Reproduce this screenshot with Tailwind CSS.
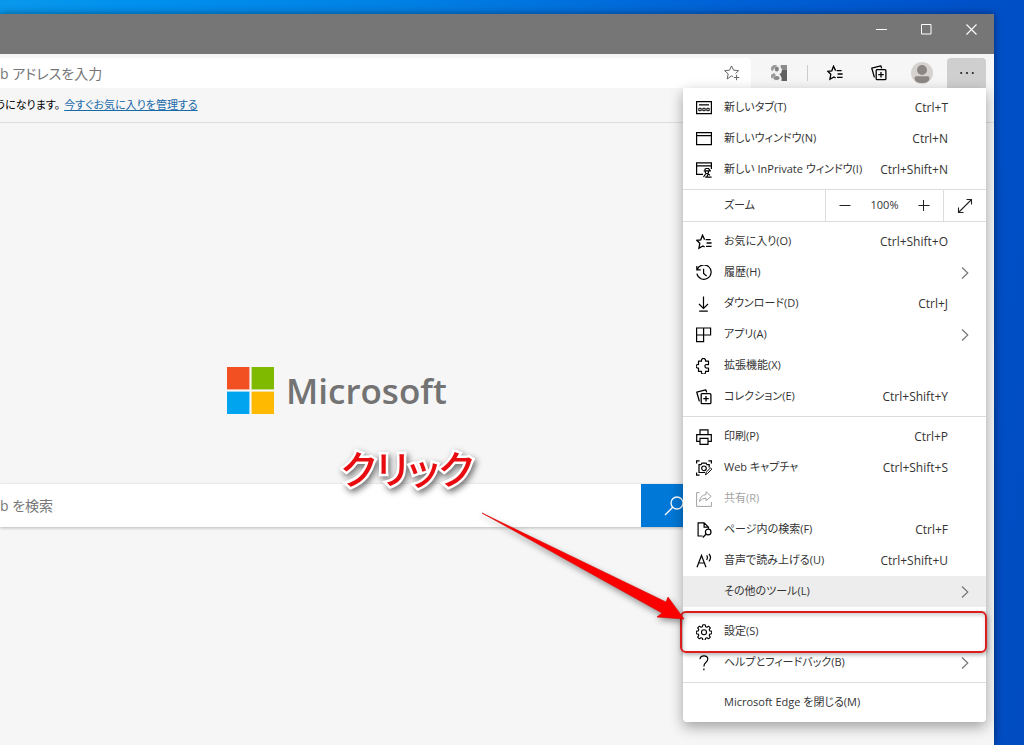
<!DOCTYPE html>
<html lang="ja">
<head>
<meta charset="utf-8">
<meta name="viewport" content="width=device-width, initial-scale=1">
<title>新しいタブ</title>
<script src="https://cdn.jsdelivr.net/npm/@tailwindcss/browser@4"></script>
</head>
<body class="font-['Open_Sans','Noto_Sans_CJK_JP',sans-serif] [font-feature-settings:'palt'] text-[#333]">
<svg class="hidden">
  <symbol id="favs" viewBox="0 0 16 16"><path d="M9.6 5.6H14.6M10.6 9H15.6M10 12.4H15.6M8.6 5.6 6.5 1.2 4.8 5.8 0.8 6.3 3.8 9.3 2.9 14.3 6.9 11.9 8.6 13" fill="none" stroke="currentColor" stroke-width="1.3"/></symbol>
  <symbol id="coll" viewBox="0 0 16 16"><path d="M5.2 4.700h8.700q1 0 1 1v8q0 1-1 1H6.200q-1 0-1-1V4.700M10 7v5.400M7.300 9.700h5.400M3.400 12.400 .8 3.200 9.800.8l.9 2.600" fill="none" stroke="currentColor" stroke-width="1.3" stroke-linejoin="round"/></symbol>
  <symbol id="chev" viewBox="0 0 8 14"><path d="M1 1.5 6.8 7 1 12.5" fill="none" stroke="#777" stroke-width="1.2"/></symbol>
</svg>

<div class="min-h-screen flex overflow-hidden relative pt-[14px] pr-[30px] bg-[linear-gradient(100deg,#0a98ec_0%,#0090ee_12%,#0080e4_35%,#0062d6_62%,#0050c8_85%,#004cc0_100%)]">
  <div class="relative flex-1 flex flex-col bg-[#f6f6f6] shadow-[0_0_8px_rgba(0,0,0,0.45)]">

    <header class="h-10 bg-[#767676] flex justify-end text-white">
      <button aria-label="最小化" class="w-[45px] h-[31px] flex items-center justify-center"><svg class="w-[11px] h-[11px]" viewBox="0 0 11 11"><path d="M0 5.5h11" stroke="currentColor"/></svg></button>
      <button aria-label="最大化" class="w-[45px] h-[31px] flex items-center justify-center"><svg class="w-[11px] h-[11px]" viewBox="0 0 11 11"><path d="M.5 .5h9.5v9.5H.5z" fill="none" stroke="currentColor"/></svg></button>
      <button aria-label="閉じる" class="w-[45px] h-[31px] flex items-center justify-center"><svg class="w-[11px] h-[11px]" viewBox="0 0 11 11"><path d="M.5 .5l10 10M10.5 .5l-10 10" stroke="currentColor" stroke-width="1.1"/></svg></button>
    </header>

    <div class="flex pt-1 h-[34px]">
      <div class="flex-1 flex items-center bg-white rounded-tr">
        <input aria-label="アドレス" placeholder="b アドレスを入力" class="flex-1 min-w-0 text-[14px] outline-none placeholder:text-[#767676]">
        <button aria-label="お気に入りに追加" class="w-[38px] flex justify-center text-[#666]"><svg class="w-4 h-4" viewBox="0 0 16 16"><path d="M9.2 11.6 7.5 10.9 3.2 14 4.2 8.9 .6 5.7 5.6 5.2 7.5 .9 9.6 5.2 14.6 5.7 11.5 8.6M12.6 9.8v5.4M9.9 12.5h5.4" fill="none" stroke="currentColor"/></svg></button>
      </div>
      <button aria-label="拡張機能 G" class="ml-2 w-10 flex items-center justify-center"><svg class="w-4 h-4" viewBox="0 0 16 16"><path d="M0 0h16v16H0z" fill="#f0f0f0"/><path d="M0 2.500Q1 .5 3 0h3L1.500 6Q0 6 0 4zM0 10l3-2 2 2-4 3.500-1-1z" fill="#9a9a9a"/><path d="M9.500 0H16v5h-4.500L10 3z" fill="#8c8c8c"/><path d="M11 5h5v11h-5.500q1-3-1-5.500L8.500 9Q11 8 11 5z" fill="#606060"/><ellipse cx="5.800" cy="4" rx="2" ry="2.600" fill="#808080"/><ellipse cx="5.500" cy="13" rx="3" ry="1.900" fill="#8a8a8a"/></svg></button>
      <span class="ml-2 mt-[7px] w-px h-4 bg-[#ccc]"></span>
      <button aria-label="お気に入り" class="ml-[5px] w-11 flex items-center justify-center text-black"><svg class="w-4 h-4"><use href="#favs"/></svg></button>
      <button aria-label="コレクション" class="w-[43px] flex items-center justify-center text-black"><svg class="w-4 h-4"><use href="#coll"/></svg></button>
      <button aria-label="プロフィール" class="w-11 flex items-center justify-center"><svg class="w-[22px] h-[22px]" viewBox="0 0 22 22"><defs><clipPath id="av"><circle cx="11" cy="11" r="11"/></clipPath></defs><circle cx="11" cy="11" r="11" fill="#d6d2d0"/><g clip-path="url(#av)" fill="#8b8684"><circle cx="11" cy="8" r="5"/><path d="M3.500 16q0-1.800 1.800-1.800h11.400q1.800 0 1.800 1.800 0 5-7.500 5t-7.500-5z"/></g></svg></button>
      <button aria-label="設定など" class="ml-[3px] mr-2 w-[39px] bg-[#cfcfcf] rounded-t-sm flex items-center justify-center"><svg class="w-4 h-4" viewBox="0 0 16 16" fill="#222"><circle cx="2.200" cy="8" r="1.100"/><circle cx="8" cy="8" r="1.100"/><circle cx="13.800" cy="8" r="1.100"/></svg></button>
    </div>

    <div class="h-[35px] border-b border-[#dedede] flex items-center gap-1 text-[11px] whitespace-nowrap text-black">
      <span class="-ml-1">うになります。</span>
      <a href="#" class="underline text-[#1a6aa8]">今すぐお気に入りを管理する</a>
    </div>

    <main class="flex-1 pt-[244px]">
      <div class="flex items-center gap-3 pl-[227px]">
        <svg class="w-[47px] h-[47px]" viewBox="0 0 47 47"><path d="M0 0h22.400v22.400H0z" fill="#f25022"/><path d="M24.600 0H47v22.400H24.600z" fill="#7fba00"/><path d="M0 24.600h22.400V47H0z" fill="#00a4ef"/><path d="M24.600 24.600H47V47H24.600z" fill="#ffb900"/></svg>
        <span class="text-[35px] leading-[47px] font-semibold text-[#737373]">Microsoft</span>
      </div>
      <form class="mt-[70px] mr-[287px] h-[43px] flex bg-white shadow-[0_1px_3px_rgba(0,0,0,0.25)]">
        <input aria-label="Web を検索" placeholder="b を検索" class="flex-1 min-w-0 text-[14px] outline-none placeholder:text-[#767676]">
        <button type="button" aria-label="検索" class="w-[66px] bg-[#0078d7] flex items-center justify-center"><svg class="w-5 h-5" viewBox="0 0 20 20" fill="none" stroke="#fff" stroke-width="1.300"><circle cx="13" cy="7" r="6"/><path d="M8.700 11.300 1 19"/></svg></button>
      </form>
    </main>

    <nav class="absolute top-[74px] right-2 w-[303px] bg-white rounded-b shadow-[0_5px_14px_rgba(0,0,0,0.35)] text-[11px] whitespace-nowrap">
      <div class="py-1 border-b border-[#dcdcdc]">
        <button class="w-full h-[31px] pl-[13px] pr-[38px] flex items-center gap-3"><svg class="w-4 h-4 shrink-0 text-black" viewBox="0 0 16 16"><path d="M.6 1.600h14.800v12H.6zM3 4.800h10" fill="none" stroke="currentColor" stroke-width="1.200"/><path d="M2.800 8.300h2.400v2.400H2.800zM6.800 8.300h2.400v2.400H6.800zM10.800 8.300h2.400v2.400h-2.400z" fill="none" stroke="currentColor"/></svg><span class="flex-1 text-left">新しいタブ(T)</span><kbd class="font-['Open_Sans'] text-[12px]">Ctrl+T</kbd></button>
        <button class="w-full h-[31px] pl-[13px] pr-[38px] flex items-center gap-3"><svg class="w-4 h-4 shrink-0 text-black" viewBox="0 0 16 16"><path d="M.6 1.600h14.800v12H.6zM.6 4.600h14.800" fill="none" stroke="currentColor" stroke-width="1.200"/></svg><span class="flex-1 text-left">新しいウィンドウ(N)</span><kbd class="font-['Open_Sans'] text-[12px]">Ctrl+N</kbd></button>
        <button class="w-full h-[31px] pl-[13px] pr-[38px] flex items-center gap-3"><svg class="w-4 h-4 shrink-0 text-black" viewBox="0 0 16 16"><path d="M7 12.400H.6V.9h14.800v6M.6 3.900h14.800M8.500 7.800l1.400-1.300h2.600l1.500 1.800M7.700 8.800h7.200M9.400 9.200v1.600q1.400 1.600 3 0V9M9.500 12.200l-2 2.800M12.200 12l1.800 1.200M9.200 15.200h6.400M12 12.200l-1.200 2.800" fill="none" stroke="currentColor" stroke-width="1.200"/></svg><span class="flex-1 text-left">新しい InPrivate ウィンドウ(I)</span><kbd class="font-['Open_Sans'] text-[12px]">Ctrl+Shift+N</kbd></button>
      </div>
      <div class="flex h-8 border-b border-[#dcdcdc]">
        <span class="w-[143px] pl-[41px] flex items-center border-r border-[#dcdcdc]">ズーム</span>
        <button aria-label="縮小" class="w-[38px] flex items-center justify-center"><svg class="w-3 h-3" viewBox="0 0 12 12"><path d="M.5 5.500h11" stroke="#222"/></svg></button>
        <span class="flex-1 flex items-center justify-center">100%</span>
        <button aria-label="拡大" class="w-[38px] flex items-center justify-center"><svg class="w-3 h-3" viewBox="0 0 12 12"><path d="M.5 5.500h11M5.500 0v11" stroke="#222"/></svg></button>
        <button aria-label="全画面表示" class="w-[43px] border-l border-[#dcdcdc] flex items-center justify-center"><svg class="w-4 h-4" viewBox="0 0 16 16"><path d="M1.500 14.500l13-13M9.500 1.500h5v5M1.500 9.500v5h5" fill="none" stroke="#222" stroke-width="1.100"/></svg></button>
      </div>
      <div class="py-1 border-b border-[#dcdcdc]">
        <button class="w-full h-[31px] pl-[13px] pr-[38px] flex items-center gap-3"><svg class="w-4 h-4 shrink-0 text-black"><use href="#favs"/></svg><span class="flex-1 text-left">お気に入り(O)</span><kbd class="font-['Open_Sans'] text-[12px]">Ctrl+Shift+O</kbd></button>
        <button class="w-full h-[31px] pl-[13px] pr-[17px] flex items-center gap-3"><svg class="w-4 h-4 shrink-0 text-black" viewBox="0 0 16 16"><path d="M1.300 4.300A7.200 7.200 0 1 1 .9 8.600M.8 1v3.900h3.900M7.600 3.800v4.600l3 2.600" fill="none" stroke="currentColor" stroke-width="1.200"/></svg><span class="flex-1 text-left">履歴(H)</span><svg class="w-2 h-[14px]"><use href="#chev"/></svg></button>
        <button class="w-full h-[31px] pl-[13px] pr-[38px] flex items-center gap-3"><svg class="w-4 h-4 shrink-0 text-black" viewBox="0 0 16 16"><path d="M7.500 .5v12M3 8l4.500 4.500L12 8M3.200 15.200h8.600" fill="none" stroke="currentColor" stroke-width="1.200"/></svg><span class="flex-1 text-left">ダウンロード(D)</span><kbd class="font-['Open_Sans'] text-[12px]">Ctrl+J</kbd></button>
        <button class="w-full h-[31px] pl-[13px] pr-[17px] flex items-center gap-3"><svg class="w-4 h-4 shrink-0 text-black" viewBox="0 0 16 16"><path d="M.6 1h14v7H.6zM7.600 1v13.600h-7V8" fill="none" stroke="currentColor" stroke-width="1.200"/></svg><span class="flex-1 text-left">アプリ(A)</span><svg class="w-2 h-[14px]"><use href="#chev"/></svg></button>
        <button class="w-full h-[31px] pl-[13px] pr-[38px] flex items-center gap-3"><svg class="w-4 h-4 shrink-0 text-black" viewBox="0 0 16 16"><path d="M2.500 3.200h3a2.100 2.100 0 1 1 4 0h3v3.400H11.300a1.800 1.800 0 1 0 0 3.400h1.200v3.400H9.500a2.100 2.100 0 1 1-4 0h-3V10a1.800 1.800 0 1 1 0-3.400z" fill="none" stroke="currentColor" stroke-width="1.200" stroke-linejoin="round"/></svg><span class="flex-1 text-left">拡張機能(X)</span></button>
        <button class="w-full h-[31px] pl-[13px] pr-[38px] flex items-center gap-3"><svg class="w-4 h-4 shrink-0 text-black"><use href="#coll"/></svg><span class="flex-1 text-left">コレクション(E)</span><kbd class="font-['Open_Sans'] text-[12px]">Ctrl+Shift+Y</kbd></button>
      </div>
      <div class="py-1 border-b border-[#dcdcdc]">
        <button class="w-full h-[31px] pl-[13px] pr-[38px] flex items-center gap-3"><svg class="w-4 h-4 shrink-0 text-black" viewBox="0 0 16 16"><path d="M4 12.300H.7V5.600h14.600v6.700H12M4 5.600V.8h8v4.800M4 9.300h8v6H4z" fill="none" stroke="currentColor" stroke-width="1.200"/></svg><span class="flex-1 text-left">印刷(P)</span><kbd class="font-['Open_Sans'] text-[12px]">Ctrl+P</kbd></button>
        <button class="w-full h-[31px] pl-[13px] pr-[38px] flex items-center gap-3"><svg class="w-4 h-4 shrink-0 text-black" viewBox="0 0 16 16"><path d="M.6 3.500V.8h3M12.400.8h3v2.700M.6 12.500v2.700h3M9 12.500H3V4.600h2l1-1.500h4l1 1.500h2.200v3" fill="none" stroke="currentColor" stroke-width="1.200"/><circle cx="8" cy="8.300" r="2.300" fill="none" stroke="currentColor" stroke-width="1.200"/><path d="M9.500 14.800l.7-2.600 4.300-4.300 1.300 1.300-4.300 4.300z" fill="none" stroke="currentColor"/></svg><span class="flex-1 text-left">Web キャプチャ</span><kbd class="font-['Open_Sans'] text-[12px]">Ctrl+Shift+S</kbd></button>
        <button disabled class="w-full h-[31px] pl-[13px] pr-[38px] flex items-center gap-3 text-[#a3a3a3]"><svg class="w-4 h-4 shrink-0" viewBox="0 0 16 16"><path d="M3.500 1.600H.6v13.800h14.800V11M10 .8l5.200 4.500L10 9.700V7.200Q6 7 3.500 10.500 4 4.300 10 3.600z" fill="none" stroke="currentColor"/></svg><span class="flex-1 text-left">共有(R)</span></button>
        <button class="w-full h-[31px] pl-[13px] pr-[38px] flex items-center gap-3"><svg class="w-4 h-4 shrink-0 text-black" viewBox="0 0 16 16"><path d="M6.500 14H2.100V.8h6l4.400 4.400v1.500M8.100.8v4.400h4.400M10.200 12l-3.400 3.500" fill="none" stroke="currentColor" stroke-width="1.200"/><circle cx="12.200" cy="10" r="2.800" fill="none" stroke="currentColor" stroke-width="1.200"/></svg><span class="flex-1 text-left">ページ内の検索(F)</span><kbd class="font-['Open_Sans'] text-[12px]">Ctrl+F</kbd></button>
        <button class="w-full h-[31px] pl-[13px] pr-[38px] flex items-center gap-3"><svg class="w-4 h-4 shrink-0 text-black" viewBox="0 0 16 16"><path d="M1 14.200 5.500 2.500 10 14.200M2.600 10h5.800M10.600 2.400q1.600 2 0 4.400M13 .8q3 3.800 0 7.600" fill="none" stroke="currentColor" stroke-width="1.200"/></svg><span class="flex-1 text-left">音声で読み上げる(U)</span><kbd class="font-['Open_Sans'] text-[12px]">Ctrl+Shift+U</kbd></button>
        <button class="w-full h-[31px] pl-[41px] pr-[17px] flex items-center bg-[#ededed]"><span class="flex-1 text-left">その他のツール(L)</span><svg class="w-2 h-[14px]"><use href="#chev"/></svg></button>
      </div>
      <div class="py-1 border-b border-[#dcdcdc]">
        <button class="relative w-full h-[31px] pl-[13px] pr-[38px] flex items-center gap-3"><svg class="w-4 h-4 shrink-0 text-black" viewBox="0 0 16 16" fill="none" stroke="currentColor" stroke-width="1.100" stroke-linejoin="round"><path d="M6.800.8h2.400l.4 2 1.300.5 1.700-1.100 1.700 1.700-1.100 1.700.5 1.300 2 .4v2.400l-2 .4-.5 1.300 1.100 1.700-1.700 1.700-1.700-1.100-1.300.5-.4 2H6.800l-.4-2-1.300-.5-1.700 1.100-1.700-1.700 1.100-1.700-.5-1.300-2-.4V7.300l2-.4.5-1.300-1.100-1.700 1.700-1.700 1.700 1.100 1.300-.5z"/><circle cx="8" cy="8.300" r="2.500"/></svg><span class="flex-1 text-left">設定(S)</span><span class="absolute -left-[3px] -right-px -top-[5px] -bottom-[6px] border-2 border-[#dd1c1c] rounded-md shadow-[1px_2px_4px_rgba(0,0,0,0.3),inset_1px_2px_4px_rgba(0,0,0,0.2)]"></span></button>
        <button class="w-full h-[31px] pl-[13px] pr-[17px] flex items-center gap-3"><svg class="w-4 h-4 shrink-0 text-black" viewBox="0 0 16 16"><path d="M4 4.200Q4.200.8 8 .8q3.800 0 3.800 3.300 0 1.900-2 3.400-1.900 1.500-1.900 4M7.900 13.500v1.700" fill="none" stroke="currentColor" stroke-width="1.200"/></svg><span class="flex-1 text-left">ヘルプとフィードバック(B)</span><svg class="w-2 h-[14px]"><use href="#chev"/></svg></button>
      </div>
      <div class="py-1">
        <button class="w-full h-[31px] pl-[41px] pr-[38px] flex items-center"><span>Microsoft Edge を閉じる(M)</span></button>
      </div>
    </nav>
  </div>

  <p class="absolute left-[341px] top-[441px] text-[39px] leading-[56px] font-medium text-[#e80c10] [-webkit-text-stroke:5px_#fff] [paint-order:stroke_fill] [filter:drop-shadow(2px_3px_3px_rgba(0,0,0,0.55))]">クリック</p>
  <svg class="absolute left-[480px] top-[510px] w-[210px] h-[116px] pointer-events-none [filter:drop-shadow(1px_3px_3px_rgba(0,0,0,0.4))]" viewBox="480 510 210 116"><path d="M482 513 L666 602 L668 597 L684 619 L657 617 L662 613 Z" fill="#fb0000" stroke="#d80000" stroke-width=".6"/></svg>
</div>
</body>
</html>
